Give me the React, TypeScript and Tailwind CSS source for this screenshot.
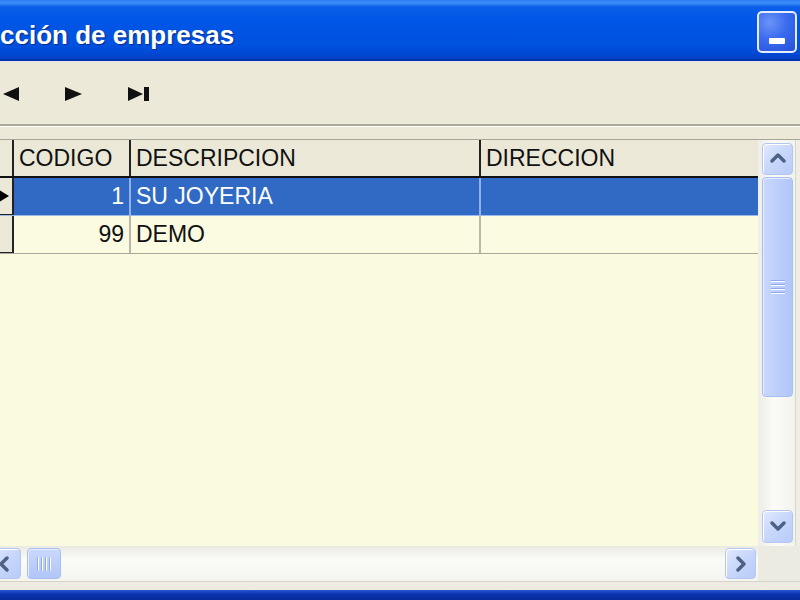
const sans = "font-['Liberation_Sans',Arial,sans-serif]"

type Dir = 'up' | 'down' | 'left' | 'right'

const chevrons: Record<Dir, string> = {
  up: '2,10 8,4 14,10',
  down: '2,4 8,10 14,4',
  left: '10,2 4,8 10,14',
  right: '5,2 11,8 5,14',
}

function ScrollButton({ dir, className = '' }: { dir: Dir; className?: string }) {
  return (
    <div
      className={`flex items-center justify-center rounded-[4px] border border-[#b4c6f0] bg-[linear-gradient(135deg,#e2eafd_0%,#c9d8fb_45%,#b8cbf8_100%)] shadow-[inset_1px_1px_0_#ffffff] ${className}`}
    >
      <svg width="16" height="16" viewBox="0 0 16 16">
        <polyline points={chevrons[dir]} fill="none" stroke="#4d6185" strokeWidth="3.4" strokeLinecap="round" strokeLinejoin="round" />
      </svg>
    </div>
  )
}

function Grip({ vertical }: { vertical: boolean }) {
  const lines = [0, 1, 2, 3]
  return (
    <div className={vertical ? 'flex flex-col gap-[2px]' : 'flex gap-[2px]'}>
      {lines.map((i) => (
        <div
          key={i}
          className={vertical ? 'h-[2px] w-[14px] border-b border-[#ffffff] bg-[#8ea9ee]' : 'h-[14px] w-[2px] border-r border-[#ffffff] bg-[#8ea9ee]'}
        />
      ))}
    </div>
  )
}

function TriLeft() {
  return (
    <svg width="16" height="14" viewBox="0 0 16 14">
      <polygon points="16,0 0,7 16,14" fill="#111" />
    </svg>
  )
}

function TriRight() {
  return (
    <svg width="17" height="14" viewBox="0 0 17 14">
      <polygon points="0,0 17,7 0,14" fill="#111" />
    </svg>
  )
}

function TriLast() {
  return (
    <svg width="22" height="14" viewBox="0 0 22 14">
      <polygon points="0,0 15,7 0,14" fill="#111" />
      <rect x="16" y="0" width="5" height="14" fill="#111" />
    </svg>
  )
}

const rows = [
  { code: '1', desc: 'SU JOYERIA', dir: '' },
  { code: '99', desc: 'DEMO', dir: '' },
]

export default function App() {
  return (
    <div className={`flex h-[600px] w-[800px] flex-col overflow-hidden bg-[#ece9d8] ${sans}`}>
      {/* title bar */}
      <div className="flex h-[61px] shrink-0 items-center justify-between border-b-[2px] border-[#0035a8] bg-[linear-gradient(180deg,#2f7df5_0px,#3d8ef9_3px,#0a5fea_7px,#0056e6_20px,#0052e0_44px,#0047d4_54px,#003dbf_61px)]">
        <span className="pt-[11px] text-[26px] font-bold leading-none text-white [text-shadow:1px_1px_1px_#0a2a8a]">cción de empresas</span>
        <div className="mr-[3px] mt-[4px] flex h-[42px] w-[40px] items-end justify-center rounded-[5px] border-2 border-[#e6ecfa] bg-[radial-gradient(circle_at_30%_25%,#6a93f6_0%,#3b6cef_45%,#2450da_100%)] pb-[7px]">
          <div className="h-[6px] w-[16px] rounded-[1px] bg-white" />
        </div>
      </div>
      <div className="h-px shrink-0 bg-[#dde2f2]" />

      {/* toolbar */}
      <div className="flex h-[64px] shrink-0 items-center gap-[46px] border-b-2 border-[#aca899] pl-[3px] pt-[2px]">
        <TriLeft />
        <TriRight />
        <TriLast />
      </div>
      <div className="h-px shrink-0 bg-white" />
      <div className="h-[12px] shrink-0" />

      {/* grid */}
      <div className="flex min-h-0 flex-1 flex-col border-t border-[#a7a59a]">
        <div className="flex min-h-0 flex-1">
          <div className="flex min-w-0 flex-1 flex-col bg-[#fafade] text-[23px] leading-none text-[#111]">
            <div className="flex h-[38px] shrink-0 border-b-2 border-[#111] bg-[#ebe8d7]">
              <div className="w-[14px] border-r-2 border-[#222]" />
              <div className="flex w-[117px] items-center border-r-2 border-[#222] pl-[5px]">CODIGO</div>
              <div className="flex w-[350px] items-center border-r-2 border-[#222] pl-[5px]">DESCRIPCION</div>
              <div className="flex flex-1 items-center pl-[5px]">DIRECCION</div>
            </div>
            {rows.map((r, i) => {
              const sel = i === 0
              return (
                <div
                  key={r.code}
                  className={`flex h-[38px] shrink-0 border-b ${sel ? 'border-[#9ab8ea] bg-[#316ac5] text-white' : 'border-[#a9a89c] bg-[#fbfbe2]'}`}
                >
                  <div className="flex w-[14px] items-center border-r-2 border-b border-[#222] bg-[#ebe8d7]">
                    {sel && (
                      <svg width="9" height="16" viewBox="0 0 9 16">
                        <polygon points="-4,0 9,8 -4,16" fill="#000" />
                      </svg>
                    )}
                  </div>
                  <div className={`flex w-[117px] items-center justify-end border-r-2 pr-[5px] ${sel ? 'border-[#8fb2ee]' : 'border-[#b8b7aa]'}`}>{r.code}</div>
                  <div className={`flex w-[350px] items-center border-r-2 pl-[5px] ${sel ? 'border-[#8fb2ee]' : 'border-[#b8b7aa]'}`}>{r.desc}</div>
                  <div className="flex flex-1 items-center pl-[5px]">{r.dir}</div>
                </div>
              )
            })}
            <div className="flex-1" />
          </div>

          {/* vertical scrollbar */}
          <div className="flex w-[37px] shrink-0 flex-col border-l border-[#eef0f4] bg-[linear-gradient(90deg,#eeede6,#fbfbf8_40%,#f3f3ee)] py-[3px] pl-[3px] pr-[2px]">
            <ScrollButton dir="up" className="h-[32px]" />
            <div className="mt-[2px] flex h-[220px] items-center justify-center rounded-[4px] border border-[#a8bdf0] bg-[linear-gradient(90deg,#c9d8fc,#bacdfa_60%,#b1c6f8)] shadow-[inset_1px_1px_0_#e6edfd]">
              <Grip vertical />
            </div>
            <div className="flex-1" />
            <ScrollButton dir="down" className="h-[33px]" />
          </div>
          <div className="w-[5px] shrink-0 border-l border-[#d8d6cc] bg-[#efede4]" />
        </div>

        {/* horizontal scrollbar */}
        <div className="flex h-[35px] shrink-0">
          <div className="flex w-[758px] items-center gap-[6px] bg-[linear-gradient(180deg,#ebeae2,#fbfbf8_40%,#f4f4ef)] py-[2px] pr-[2px]">
            <ScrollButton dir="left" className="ml-[-12px] h-[31px] w-[33px]" />
            <div className="flex h-[31px] w-[34px] items-center justify-center rounded-[4px] border border-[#a8bdf0] bg-[linear-gradient(180deg,#c9d8fc,#bacdfa_60%,#b1c6f8)] shadow-[inset_1px_1px_0_#e6edfd]">
              <Grip vertical={false} />
            </div>
            <div className="flex-1" />
            <ScrollButton dir="right" className="h-[31px] w-[31px]" />
          </div>
          <div className="flex-1 bg-[#ecebe1]" />
        </div>
      </div>

      {/* bottom frame */}
      <div className="h-[9px] shrink-0 border-t border-[#d6d4c8] bg-[#eeece2]" />
      <div className="h-[10px] shrink-0 bg-[linear-gradient(180deg,#2a55d0,#0b35b2_40%,#082a98)]" />
    </div>
  )
}
